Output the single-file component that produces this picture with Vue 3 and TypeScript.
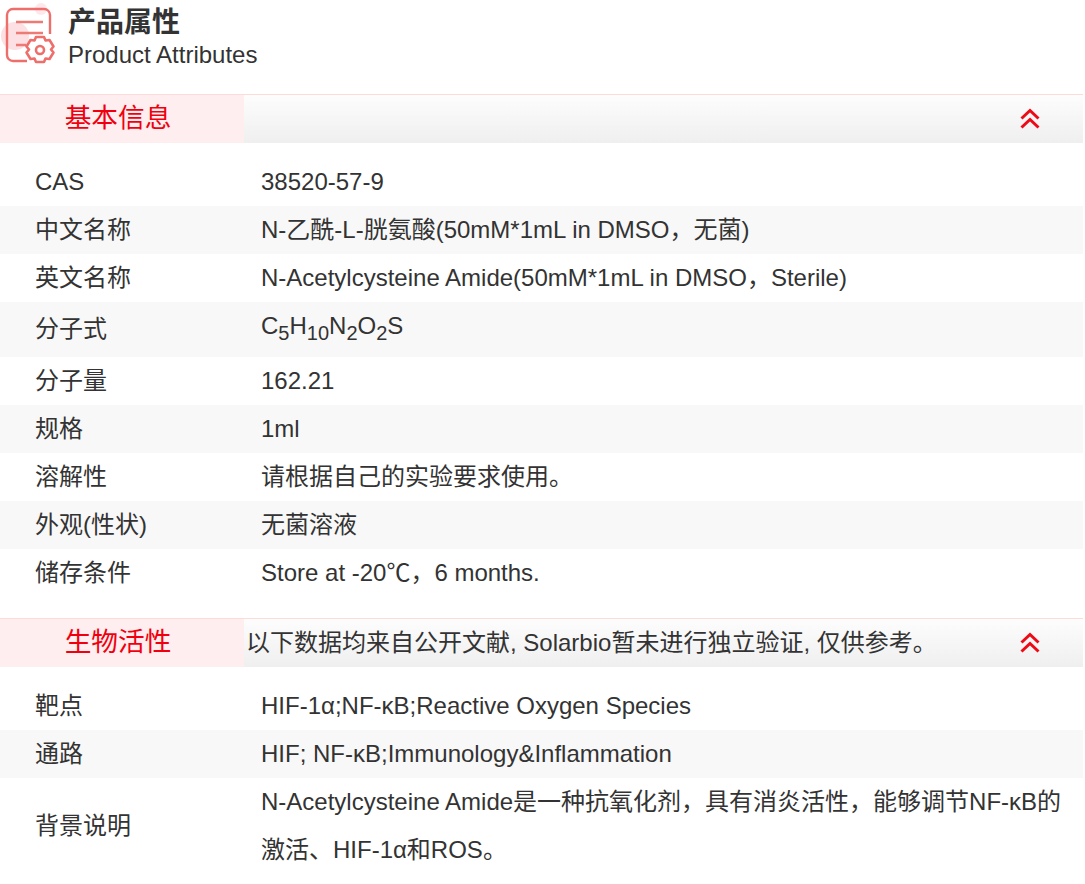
<script setup lang="ts">
interface Row { label: string; value?: string; alt?: boolean }
const basic: Row[] = [
  { label: 'CAS', value: '38520-57-9' },
  { label: '中文名称', value: 'N-乙酰-L-胱氨酸(50mM*1mL in DMSO，无菌)', alt: true },
  { label: '英文名称', value: 'N-Acetylcysteine Amide(50mM*1mL in DMSO，Sterile)' },
]
const basic2: Row[] = [
  { label: '分子量', value: '162.21' },
  { label: '规格', value: '1ml', alt: true },
  { label: '溶解性', value: '请根据自己的实验要求使用。' },
  { label: '外观(性状)', value: '无菌溶液', alt: true },
  { label: '储存条件', value: 'Store at -20℃，6 months.' },
]
const bio: Row[] = [
  { label: '靶点', value: 'HIF-1α;NF-κB;Reactive Oxygen Species' },
  { label: '通路', value: 'HIF; NF-κB;Immunology&Inflammation', alt: true },
]
</script>

<template>
  <div class="page">
    <header class="head">
      <svg class="logo" width="56" height="66" viewBox="0 0 56 66" fill="none">
        <circle cx="15" cy="36" r="14" fill="#f9c6cc" opacity=".55" />
        <circle cx="41" cy="9" r="6" fill="#fbd5da" opacity=".55" />
        <path d="M27 61H13a6 6 0 0 1-6-6V15a6 6 0 0 1 6-6h31a6 6 0 0 1 6 6v19" stroke="#ee6e6b" stroke-width="2.400" />
        <path d="M16 22h27M16 33h27M16 45h10" stroke="#ee7a76" stroke-width="2.400" />
        <g stroke="#ee6e6b" stroke-width="2.600" stroke-linejoin="round">
          <path d="M36 37h8l1.500 3.500 4-.5 4 6.500-2.500 3 2.500 3-4 6.500-4-.5-1.500 3.500h-8l-1.500-3.500-4 .5-4-6.500 2.500-3-2.500-3 4-6.500 4 .5z" />
          <circle cx="40" cy="50" r="4" />
        </g>
      </svg>
      <div class="head-text">
        <div class="title">产品属性</div>
        <div class="subtitle">Product Attributes</div>
      </div>
    </header>

    <section class="section first">
      <div class="bar">
        <div class="bar-title">基本信息</div>
        <div class="bar-body">
          <svg class="chev" width="22" height="22" viewBox="0 0 22 22" fill="none" stroke="#ee0a14" stroke-width="3">
            <path d="M2.500 10.500 11 2.500l8.500 8M2.500 19.500 11 11.500l8.500 8" />
          </svg>
        </div>
      </div>
      <div class="rows">
        <div v-for="r in basic" :key="r.label" class="row" :class="{ alt: r.alt }">
          <div class="label">{{ r.label }}</div>
          <div class="value">{{ r.value }}</div>
        </div>
        <div class="row alt">
          <div class="label">分子式</div>
          <div class="value">C<sub>5</sub>H<sub>10</sub>N<sub>2</sub>O<sub>2</sub>S</div>
        </div>
        <div v-for="r in basic2" :key="r.label" class="row" :class="{ alt: r.alt }">
          <div class="label">{{ r.label }}</div>
          <div class="value">{{ r.value }}</div>
        </div>
      </div>
    </section>

    <section class="section second">
      <div class="bar">
        <div class="bar-title">生物活性</div>
        <div class="bar-body">
          <span class="note">以下数据均来自公开文献, Solarbio暂未进行独立验证, 仅供参考。</span>
          <svg class="chev" width="22" height="22" viewBox="0 0 22 22" fill="none" stroke="#ee0a14" stroke-width="3">
            <path d="M2.500 10.500 11 2.500l8.500 8M2.500 19.500 11 11.500l8.500 8" />
          </svg>
        </div>
      </div>
      <div class="rows">
        <div v-for="r in bio" :key="r.label" class="row" :class="{ alt: r.alt }">
          <div class="label">{{ r.label }}</div>
          <div class="value">{{ r.value }}</div>
        </div>
        <div class="row">
          <div class="label">背景说明</div>
          <div class="value">N-Acetylcysteine Amide是一种抗氧化剂，具有消炎活性，能够调节NF-κB的激活、HIF-1α和ROS。</div>
        </div>
      </div>
    </section>
  </div>
</template>

<style>
html, body { margin: 0; background: #fff; overflow: hidden; }
</style>

<style scoped>
.page {
  width: 1085px;
  height: 884px;
  overflow: hidden;
  font-family: "Liberation Sans", "Noto Sans CJK SC", sans-serif;
  color: #333;
  font-size: 24px;
}
.head { display: flex; height: 94px; box-sizing: border-box; }
.logo { flex: none; }
.head-text { margin-left: 12px; padding-top: 6px; }
.title { font-size: 28px; font-weight: 700; line-height: 34px; }
.subtitle { font-size: 24px; line-height: 30px; }
.section.second { margin-top: 21px; }
.bar { display: flex; height: 49px; border-top: 1px solid #fddcd8; box-sizing: border-box; width: 1083px; }
.bar-title {
  width: 244px;
  flex: none;
  box-sizing: border-box;
  padding-right: 8px;
  background: #ffeef0;
  color: #f0000f;
  font-size: 26.700px;
  line-height: 46px;
  text-align: center;
}
.bar-body {
  flex: 1;
  display: flex;
  align-items: center;
  background: linear-gradient(#fdfdfd, #efefef);
  padding: 0 42px 0 2px;
}
.note { color: #333; line-height: 46px; }
.chev { margin-left: auto; }
.rows { padding-top: 15px; width: 1083px; }
.row { display: flex; align-items: center; min-height: 48px; }
.row.alt { background: #f8f8f8; }
.label { width: 261px; padding-left: 35px; box-sizing: border-box; flex: none; line-height: 48px; }
.value { flex: 1; line-height: 48px; padding-right: 20px; }
sub { font-size: 20px; }
</style>
